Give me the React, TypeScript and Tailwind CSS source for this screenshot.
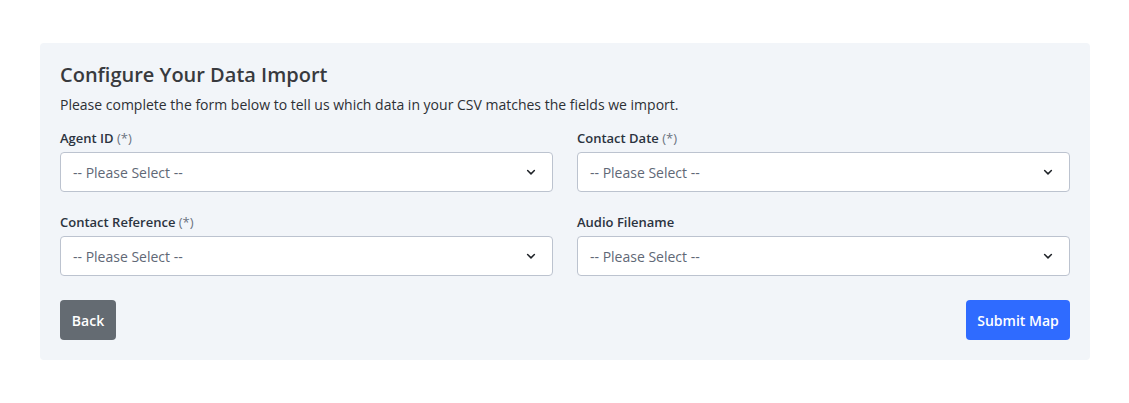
import React from "react";

function Chevron() {
  return (
    <svg width="12" height="12" viewBox="0 0 16 16" fill="none" className="shrink-0">
      <path d="M3.5 6l4.5 4.5L12.5 6" stroke="#1f2328" strokeWidth="2" strokeLinecap="round" strokeLinejoin="round" />
    </svg>
  );
}

function Field({ label, required }: { label: string; required?: boolean }) {
  return (
    <div className="flex flex-col">
      <label className="text-[13px] leading-[18px] font-semibold text-[#2b3340]">
        {label}
        {required && <span className="font-normal text-[#6b7380]"> (*)</span>}
      </label>
      <div className="mt-[5px] h-10 flex items-center justify-between rounded-[4px] border border-[#bcc3cf] bg-white pl-3 pr-[15px]">
        <span className="text-[14px] text-[#5f6876]">-- Please Select --</span>
        <Chevron />
      </div>
    </div>
  );
}

export default function App() {
  return (
    <div className="min-h-screen bg-white pt-[43px] px-10" style={{ fontFamily: '"Open Sans", sans-serif' }}>
      <div className="w-[1050px] rounded-[4px] bg-[#f2f5f9] px-5 pt-5 pb-5">
        <h1 className="text-[20px] leading-6 font-semibold text-[#383a3e]">Configure Your Data Import</h1>
        <p className="mt-2 text-[14px] leading-[19px] text-[#2d3035]">
          Please complete the form below to tell us which data in your CSV matches the fields we import.
        </p>
        <div className="mt-[15px] grid grid-cols-2 gap-x-6 gap-y-[21px]">
          <Field label="Agent ID" required />
          <Field label="Contact Date" required />
          <Field label="Contact Reference" required />
          <Field label="Audio Filename" />
        </div>
        <div className="mt-6 flex justify-between">
          <button className="h-10 w-14 rounded-[4px] bg-[#646b72] text-[14px] font-semibold text-white">Back</button>
          <button className="h-10 w-[104px] rounded-[4px] bg-[#2f6bff] text-[14px] font-semibold text-white">Submit Map</button>
        </div>
      </div>
    </div>
  );
}
